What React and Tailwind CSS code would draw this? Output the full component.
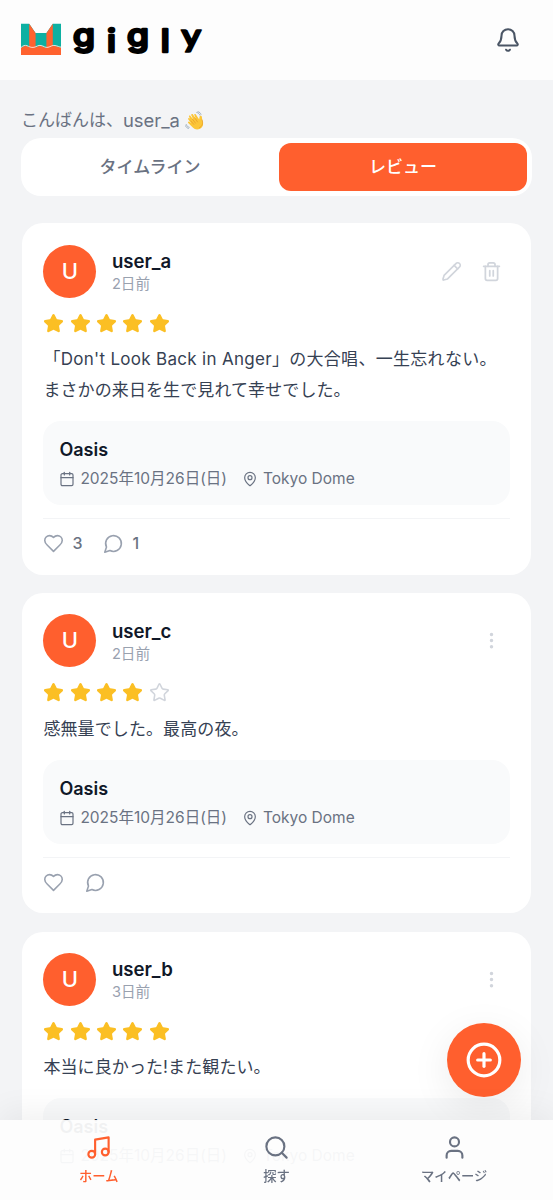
import React from "react";
import {
    Bell,
    Calendar,
    CirclePlus,
    EllipsisVertical,
    MapPin,
    Music,
    Search,
    Star,
    Trash2,
    User,
} from "lucide-react";

const reviews = [
    {
        id: 1,
        user: "user_a",
        time: "2日前",
        rating: 5,
        lines: [
            "「Don't Look Back in Anger」の大合唱、一生忘れない。",
            "まさかの来日を生で見れて幸せでした。",
        ],
        likes: 3,
        comments: 1,
        own: true,
    },
    {
        id: 2,
        user: "user_c",
        time: "2日前",
        rating: 4,
        lines: ["感無量でした。最高の夜。"],
    },
    {
        id: 3,
        user: "user_b",
        time: "3日前",
        rating: 5,
        lines: ["本当に良かった!また観たい。"],
    },
];

const Logo = () => (
    <svg width="190" height="56" viewBox="0 -10 190 56" className="block">
        <path d="M0 1.800h8.200l6.400 9.200h10.800l6.400-9.200H40v31.200H0z" fill="#0eb0a2" />
        <path d="M8.200 1.800l6.400 9.500v15H8.200zM31.800 1.800l-6.400 9.500v15h6.400z" fill="#ff622f" />
        <path
            d="M0 26c2-1.800 4-2.600 6-1.800s4 2.200 7 1.600 4-2.400 7-1.800 4 2.400 7 1.800 4-2.400 7-1.800 4 1.400 6 1.600V33H0z"
            fill="#ff622f"
        />
        <path
            d="M0 25.500c2-1.800 4-2.600 6-1.800s4 2.200 7 1.600 4-2.400 7-1.800 4 2.400 7 1.800 4-2.400 7-1.800 4 1.400 6 1.600"
            fill="none"
            stroke="#fde9df"
            strokeWidth="0.9"
        />
        <text
            transform="scale(1.14 1)"
            x="45.700 75.500 93 122.500"
            y="24.300 30.500 24.300 30"
            fontFamily="Inter, sans-serif"
            fontSize="31"
            fontWeight="500"
            stroke="#000"
            strokeWidth="2.500"
            strokeLinejoin="round"
        >
            gigl
            <tspan
                x="140.500"
                y="25"
                fontFamily="Lato, sans-serif"
                fontSize="33"
                fontWeight="700"
                strokeWidth="1.500"
            >
                y
            </tspan>
        </text>
    </svg>
);

const WavingHand = () => (
    <svg width="20" height="20" viewBox="0 0 20 20" className="block">
        <path
            d="M5.200 8.200L4 5.600c-.4-1 .9-1.700 1.500-.7l2.700 3.500L6.300 4.300c-.4-1.100 1.100-1.800 1.700-.8l3 4.600-1.700-4c-.4-1.100 1-1.700 1.600-.7l3.300 5.200.3-2.700c.1-1.500 2.200-1.500 2.400 0 .2 1.600.3 3.100.9 5 .8 2.700-.2 5.400-2.700 6.800-2.500 1.400-5.300 1-7.300-1.100L3.200 12c-.8-.9.4-2.100 1.300-1.300l1.800 1.500-3-3.700c-.7-1 .6-2 1.300-1.100z"
            fill="#fcc638"
        />
        <path
            d="M7.500 8.200l3 4M9.800 6.900l2.700 4M5.800 9.900l3 3.500M17.200 9c1 3.400.4 6-2.700 7.600"
            fill="none"
            stroke="#e59a26"
            strokeWidth="0.7"
            strokeLinecap="round"
        />
        <path
            d="M11.800 1.500c1.500.3 2.500 1.200 3 2.600M13 .7c1.500.4 2.600 1.300 3 2.700M1.200 13.500c.5 1.400 1.500 2.400 3 2.800M.5 14.800c.6 1.400 1.500 2.300 2.900 2.600"
            fill="none"
            stroke="#8ba0b2"
            strokeWidth="0.8"
            strokeLinecap="round"
        />
    </svg>
);

const PencilIcon = () => (
    <svg
        width="21"
        height="21"
        viewBox="0 0 24 24"
        fill="none"
        stroke="currentColor"
        strokeWidth="1.900"
        strokeLinecap="round"
        strokeLinejoin="round"
    >
        <path d="M17 3a2.850 2.830 0 1 1 4 4L7.500 20.500 3 21.700a.6.6 0 0 1-.8-.8l1.300-4.400z" />
        <path d="m15 5 4 4" />
    </svg>
);

const HeartIcon = () => (
    <svg
        width="21"
        height="21"
        viewBox="0 0 24 24"
        fill="none"
        stroke="currentColor"
        strokeWidth="1.800"
        strokeLinecap="round"
        strokeLinejoin="round"
    >
        <path d="M19 14c1.490-1.460 3-3.210 3-5.500A5.500 5.500 0 0 0 16.500 3c-1.760 0-3 .5-4.500 2-1.500-1.500-2.740-2-4.500-2A5.500 5.500 0 0 0 2 8.500c0 2.300 1.500 4.050 3 5.500l7 7Z" />
    </svg>
);

const CommentIcon = () => (
    <svg
        width="21"
        height="21"
        viewBox="0 0 24 24"
        fill="none"
        stroke="currentColor"
        strokeWidth="1.800"
        strokeLinecap="round"
        strokeLinejoin="round"
    >
        <path d="M7.900 20A9 9 0 1 0 4 16.100L2 22Z" />
    </svg>
);

const EventBox = () => (
    <div className="mt-[15px] h-[84px] rounded-[18px] bg-gray-50 px-4 pt-[15px]">
        <h4 className="text-[18px] leading-[28px] font-semibold text-gray-900">Oasis</h4>
        <div className="mt-[3px] flex items-center text-[15.500px] leading-[24px] text-gray-500">
            <Calendar size={16} strokeWidth={1.8} />
            <span className="ml-[5px]">2025年10月26日(日)</span>
            <MapPin size={16} strokeWidth={1.8} className="ml-[15px]" />
            <span className="ml-[5px]">Tokyo Dome</span>
        </div>
    </div>
);

const ReviewCard = ({ review }) => (
    <article className="rounded-[21px] bg-white px-[21.400px] pt-[21.300px] pb-[20.200px]">
        <div className="flex h-[53px] items-center">
            <div className="flex h-[53px] w-[53px] items-center justify-center rounded-full bg-[#ff5f2e] text-[22px] font-medium text-white">
                U
            </div>
            <div className="ml-[15.500px] flex-1">
                <p className="text-[18.600px] leading-[26px] font-semibold text-gray-900">{review.user}</p>
                <p className="text-[14.600px] leading-[20px] text-gray-400">{review.time}</p>
            </div>
            {review.own ? (
                <div className="mr-[8px] flex items-center gap-[19px] text-gray-300">
                    <PencilIcon />
                    <Trash2 size={21} strokeWidth={2} />
                </div>
            ) : (
                <EllipsisVertical size={21} className="mr-[8px] text-gray-300" />
            )}
        </div>

        <div className="mt-[15px] flex gap-[5.300px]">
            {[1, 2, 3, 4, 5].map((n) => (
                <Star
                    key={n}
                    size={21}
                    strokeWidth={1.8}
                    className={n <= review.rating ? "fill-[#fbbf24] text-[#fbbf24]" : "text-gray-300"}
                />
            ))}
        </div>

        <div className="mt-[10.300px] text-[17px] leading-[31px] tracking-[0.100px] text-gray-700">
            {review.lines.map((line) => (
                <p key={line} className="whitespace-nowrap first:not-last:tracking-[0.300px]">{line}</p>
            ))}
        </div>

        <EventBox />

        <div className="mt-[13.500px] flex items-center border-t border-gray-100 pt-[14px] text-[16px] leading-[21px] font-medium text-gray-500">
            <span className="text-gray-400">
                <HeartIcon />
            </span>
            {review.likes && <span className="ml-2">{review.likes}</span>}
            <span className="ml-[21px] text-gray-400">
                <CommentIcon />
            </span>
            {review.comments && <span className="ml-2">{review.comments}</span>}
        </div>
    </article>
);

const NavItem = ({ icon: Icon, label, active }) => (
    <button
        className={`flex flex-1 flex-col items-center pt-[14px] ${active ? "text-[#ff5f2e]" : "text-gray-500"}`}
    >
        <Icon size={27} strokeWidth={1.9} />
        <span className="mt-[5px] text-[13.300px] leading-[20px] font-medium">{label}</span>
    </button>
);

const App = () => {
    return (
        <div className="relative h-[1200px] w-full overflow-hidden bg-gray-100 font-['Inter','Noto_Sans_CJK_JP',sans-serif]">
            <header className="flex h-20 items-center justify-between bg-[#fdfdfd] pr-8 pb-px pl-[21px]">
                <Logo />
                <Bell size={26} strokeWidth={1.9} className="text-gray-600" />
            </header>

            <main className="px-[21px] pt-[25px]">
                <div className="mb-[2px] flex h-[31px] items-center text-[17px] text-gray-500">
                    <span>こんばんは、</span>
                    <span className="mr-[5px] text-[18.400px]">user_a</span>
                    <WavingHand />
                </div>

                <div className="flex h-[58px] rounded-[20px] bg-white py-[5px] pr-[5px] text-[17px] font-medium">
                    <button className="flex-1 pt-px text-gray-500">タイムライン</button>
                    <button className="w-[248px] rounded-xl bg-[#ff5f2e] pt-px text-white">レビュー</button>
                </div>

                <div className="mt-[27.400px] flex flex-col gap-[18.300px] px-[1px]">
                    {reviews.map((review) => (
                        <ReviewCard key={review.id} review={review} />
                    ))}
                </div>
            </main>

            <button className="fixed right-8 bottom-[103px] flex h-[74px] w-[74px] items-center justify-center rounded-full bg-[#ff5f2e] text-white shadow-[0_10px_40px_rgba(0,0,0,0.08)]">
                <CirclePlus size={38} strokeWidth={2} />
            </button>

            <nav className="fixed inset-x-0 bottom-0 flex h-[80.500px] bg-[#fdfdfd]/95 px-[10px] shadow-[0_-8px_32px_rgba(0,0,0,0.06)]">
                <NavItem icon={Music} label="ホーム" active />
                <NavItem icon={Search} label="探す" />
                <NavItem icon={User} label="マイページ" />
            </nav>
        </div>
    );
};

export default App;
